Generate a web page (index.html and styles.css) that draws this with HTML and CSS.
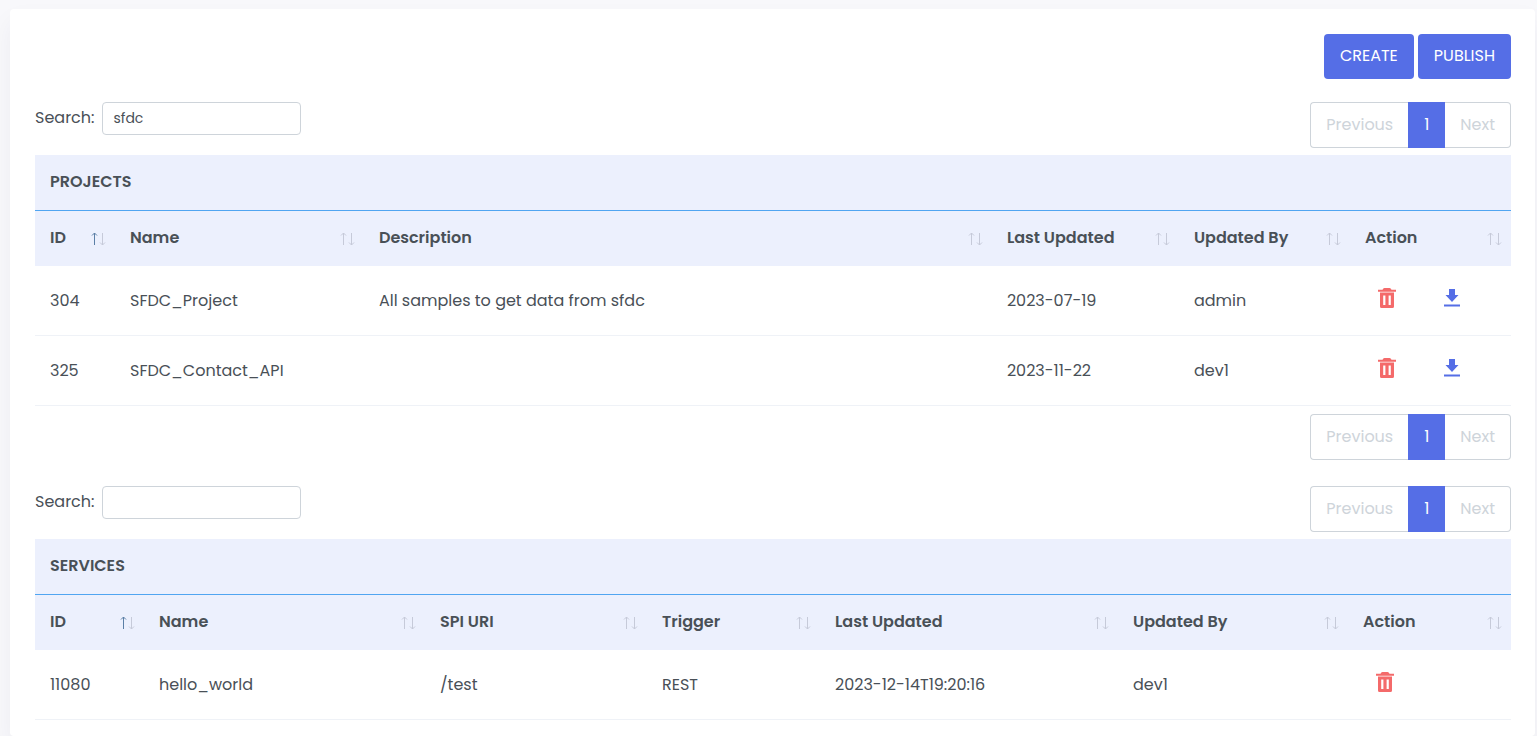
FILE: index.html
```html
<!doctype html>
<html lang="en">
  <head>
    <meta charset="UTF-8" />
    <meta name="viewport" content="width=device-width, initial-scale=1.0" />
    <title>Projects</title>
    <link rel="stylesheet" href="styles.css">
  </head>
  <body>
    <svg class="sprite" aria-hidden="true">
      <symbol id="icon-sort" viewBox="0 0 16 14">
        <g fill="none" stroke="currentColor" stroke-width="1">
          <path class="arrow-up" d="M4.5 1v12M2 3.5l2.500-2.500 2.500 2.500" />
          <path d="M12.500 1v12M10 10.500l2.500 2.500 2.500-2.500" />
        </g>
      </symbol>
      <symbol id="icon-trash" viewBox="0 0 18 20">
        <path fill="currentColor" fill-rule="evenodd" d="M5 1Q5.500 0 6.500 0H11.500Q12.500 0 13 1L13.500 1.700H18V3.700H0V1.700H4.500ZM2 4.500H16V18.500Q16 20 14.500 20H3.500Q2 20 2 18.500ZM5.200 7.500V17H7.400V7.500ZM10.600 7.500V17H12.800V7.500Z" />
      </symbol>
      <symbol id="icon-download" viewBox="0 0 16 18">
        <path fill="currentColor" d="M5 0H11V6H14.500L8 13L1.500 6H5ZM0 15.500H16V17.500H0Z" />
      </symbol>
    </svg>

    <main class="card">
      <div class="toolbar">
        <button class="btn" type="button">CREATE</button>
        <button class="btn" type="button">PUBLISH</button>
      </div>

      <section>
        <div class="table-controls">
          <div class="search">
            <label for="project-search">Search:</label>
            <input id="project-search" type="text" value="sfdc" />
          </div>
          <nav class="pagination" aria-label="Projects pages">
            <button type="button" disabled>Previous</button>
            <button class="active" type="button">1</button>
            <button type="button" disabled>Next</button>
          </nav>
        </div>

        <table class="data-table">
          <colgroup>
            <col class="col-project-id" />
            <col />
            <col class="col-description" />
            <col class="col-project-date" />
            <col class="col-project-user" />
            <col class="col-project-action" />
          </colgroup>
          <thead>
            <tr class="title-row"><th colspan="6">PROJECTS</th></tr>
            <tr class="head-row">
              <th><button class="sort sorted" type="button">ID <svg><use href="#icon-sort" /></svg></button></th>
              <th><button class="sort" type="button">Name <svg><use href="#icon-sort" /></svg></button></th>
              <th><button class="sort" type="button">Description <svg><use href="#icon-sort" /></svg></button></th>
              <th><button class="sort" type="button">Last Updated <svg><use href="#icon-sort" /></svg></button></th>
              <th><button class="sort" type="button">Updated By <svg><use href="#icon-sort" /></svg></button></th>
              <th><button class="sort" type="button">Action <svg><use href="#icon-sort" /></svg></button></th>
            </tr>
          </thead>
          <tbody>
            <tr>
              <td>304</td>
              <td>SFDC_Project</td>
              <td>All samples to get data from sfdc</td>
              <td>2023-07-19</td>
              <td>admin</td>
              <td>
                <div class="actions">
                  <button class="icon-btn delete" type="button" aria-label="Delete"><svg><use href="#icon-trash" /></svg></button>
                  <button class="icon-btn download" type="button" aria-label="Download"><svg><use href="#icon-download" /></svg></button>
                </div>
              </td>
            </tr>
            <tr>
              <td>325</td>
              <td>SFDC_Contact_API</td>
              <td></td>
              <td>2023-11-22</td>
              <td>dev1</td>
              <td>
                <div class="actions">
                  <button class="icon-btn delete" type="button" aria-label="Delete"><svg><use href="#icon-trash" /></svg></button>
                  <button class="icon-btn download" type="button" aria-label="Download"><svg><use href="#icon-download" /></svg></button>
                </div>
              </td>
            </tr>
          </tbody>
        </table>

        <div class="table-footer">
          <nav class="pagination" aria-label="Projects pages, bottom">
            <button type="button" disabled>Previous</button>
            <button class="active" type="button">1</button>
            <button type="button" disabled>Next</button>
          </nav>
        </div>
      </section>

      <section>
        <div class="table-controls">
          <div class="search">
            <label for="service-search">Search:</label>
            <input id="service-search" type="text" />
          </div>
          <nav class="pagination" aria-label="Services pages">
            <button type="button" disabled>Previous</button>
            <button class="active" type="button">1</button>
            <button type="button" disabled>Next</button>
          </nav>
        </div>

        <table class="data-table">
          <colgroup>
            <col class="col-service-id" />
            <col />
            <col class="col-uri" />
            <col class="col-trigger" />
            <col class="col-service-date" />
            <col class="col-service-user" />
            <col class="col-service-action" />
          </colgroup>
          <thead>
            <tr class="title-row"><th colspan="7">SERVICES</th></tr>
            <tr class="head-row">
              <th><button class="sort sorted" type="button">ID <svg><use href="#icon-sort" /></svg></button></th>
              <th><button class="sort" type="button">Name <svg><use href="#icon-sort" /></svg></button></th>
              <th><button class="sort" type="button">SPI URI <svg><use href="#icon-sort" /></svg></button></th>
              <th><button class="sort" type="button">Trigger <svg><use href="#icon-sort" /></svg></button></th>
              <th><button class="sort" type="button">Last Updated <svg><use href="#icon-sort" /></svg></button></th>
              <th><button class="sort" type="button">Updated By <svg><use href="#icon-sort" /></svg></button></th>
              <th><button class="sort" type="button">Action <svg><use href="#icon-sort" /></svg></button></th>
            </tr>
          </thead>
          <tbody>
            <tr>
              <td>11080</td>
              <td>hello_world</td>
              <td>/test</td>
              <td>REST</td>
              <td>2023-12-14T19:20:16</td>
              <td>dev1</td>
              <td>
                <div class="actions">
                  <button class="icon-btn delete" type="button" aria-label="Delete"><svg><use href="#icon-trash" /></svg></button>
                </div>
              </td>
            </tr>
          </tbody>
        </table>
      </section>
    </main>
  </body>
</html>
```

FILE: styles.css
```css
* {
  box-sizing: border-box;
}

body {
  margin: 0;
  padding: 9px 2px 0 10px;
  background: #f8f8fb;
  color: #495057;
  font-family: Poppins, Inter, "Open Sans", sans-serif;
  font-size: 16px;
  line-height: 24px;
}

button,
input {
  font: inherit;
  color: inherit;
}

button {
  cursor: pointer;
}

.sprite {
  display: none;
}

.card {
  min-height: calc(100vh - 9px);
  padding: 25px 24px 15px 25px;
  background: #fff;
  border-radius: 4px;
  box-shadow: 0 12px 24px rgba(40, 20, 80, 0.05);
}

.toolbar {
  display: flex;
  justify-content: flex-end;
  gap: 4px;
  margin-bottom: 23px;
}

.btn {
  height: 45px;
  padding: 0 16px 2px;
  border: 0;
  border-radius: 4px;
  background: #556ee6;
  color: #fff;
}

.table-controls {
  display: flex;
  justify-content: space-between;
  align-items: flex-start;
  margin-bottom: 7px;
}

.search {
  display: flex;
  gap: 8px;
}

.search label {
  padding-top: 4px;
}

.search input {
  width: 199px;
  height: 33px;
  padding: 0 10px;
  border: 1px solid #ced4da;
  border-radius: 4px;
  background: #fff;
  font-size: 14px;
}

.pagination {
  display: flex;
}

.pagination button {
  height: 46px;
  padding: 0 15px;
  border: 1px solid #ced4da;
  background: #fff;
  color: #ced4da;
}

.pagination button:first-child {
  border-right: 0;
  border-radius: 4px 0 0 4px;
}

.pagination button:last-child {
  border-left: 0;
  border-radius: 0 4px 4px 0;
}

.pagination .active {
  border-color: #556ee6;
  background: #556ee6;
  color: #fff;
}

.table-footer {
  display: flex;
  justify-content: flex-end;
  padding: 8px 0 26px;
}

.data-table {
  width: 100%;
  table-layout: fixed;
  border-spacing: 0;
}

.data-table th {
  height: 55px;
  padding: 0 15px 2px;
  background: #ecf0fd;
  font-weight: 600;
  text-align: left;
}

.data-table .title-row th {
  height: 56px;
  border-bottom: 1px solid #50a5f1;
}

.data-table .head-row th {
  padding-right: 9px;
}

.data-table td {
  height: 70px;
  padding: 0 15px;
  border-bottom: 1px solid #eff2f7;
}

.sort {
  display: flex;
  justify-content: space-between;
  align-items: center;
  width: 100%;
  padding: 0;
  border: 0;
  background: none;
  white-space: nowrap;
}

.sort svg {
  flex: none;
  width: 16px;
  height: 14px;
  margin-top: 2px;
  color: #c6cad9;
}

.sorted svg {
  --arrow-up: #5b7fa6;
}

.arrow-up {
  stroke: var(--arrow-up, currentColor);
}

.actions {
  display: flex;
  align-items: center;
  gap: 48px;
  padding: 0 13px 5px;
}

.icon-btn {
  display: flex;
  padding: 0;
  border: 0;
  background: none;
}

.delete {
  color: #f46a6a;
}

.delete svg {
  width: 18px;
  height: 20px;
}

.download {
  color: #556ee6;
}

.download svg {
  width: 16px;
  height: 18px;
}

.col-project-id {
  width: 80px;
}

.col-description {
  width: 628px;
}

.col-project-date {
  width: 187px;
}

.col-project-user {
  width: 171px;
}

.col-project-action {
  width: 161px;
}

.col-service-id {
  width: 109px;
}

.col-uri {
  width: 222px;
}

.col-trigger {
  width: 173px;
}

.col-service-date {
  width: 298px;
}

.col-service-user {
  width: 230px;
}

.col-service-action {
  width: 163px;
}
```
